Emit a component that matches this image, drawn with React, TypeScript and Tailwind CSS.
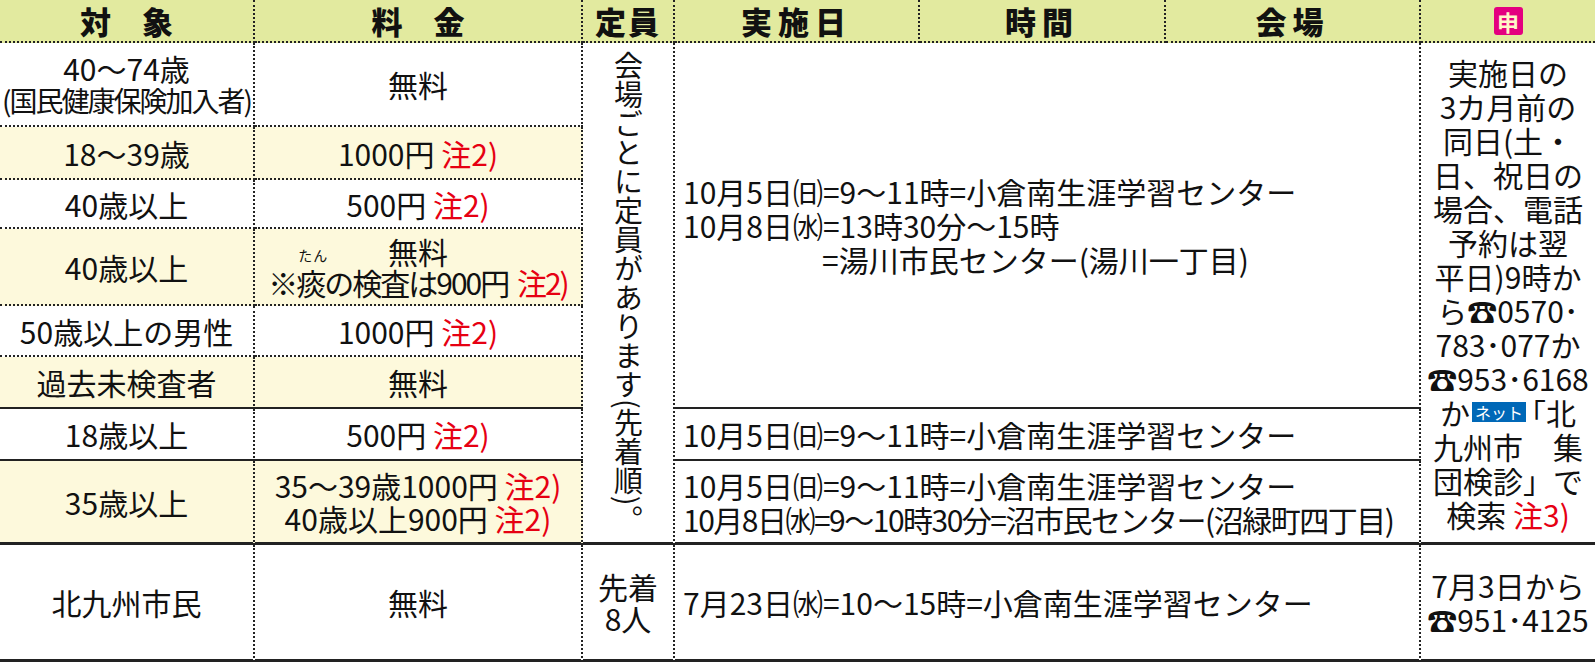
import React from 'react';

/** 罫線 */
const dotR = 'border-r-2 [border-right-style:dotted] border-r-[#222]';
const dotB = 'border-b-2 [border-bottom-style:dotted] border-b-[#222]';
const solB = 'border-b-2 border-b-[#222]';
const solB3 = 'border-b-[3px] border-b-[#222]';

const cream = 'bg-[#fdf9dc]';

const Note: React.FC<{ n?: string; className?: string }> = ({ n = '2', className = '' }) => (
  <span className={`text-[#e60012] ${className}`}> 注{n})</span>
);

const Cell: React.FC<{ className?: string; children?: React.ReactNode }> = ({ className = '', children }) => (
  <div className={`flex flex-col items-center justify-center text-center whitespace-nowrap ${className}`}>{children}</div>
);

const headers = [
  { label: '対　象', w: 'w-[255px]', cls: '' },
  { label: '料　金', w: 'w-[328px]', cls: '' },
  { label: '定員', w: 'w-[92px]', cls: 'tracking-[2px]' },
  { label: '実施日', w: 'w-[245px]', cls: 'tracking-[6px]' },
  { label: '時間', w: 'w-[246px]', cls: 'tracking-[6px]' },
  { label: '会場', w: 'w-[255px]', cls: 'tracking-[6px]' },
];

// 対象・料金の行
const rows: { target: React.ReactNode; fee: React.ReactNode; bg: string; border: string }[] = [
  {
    target: (
      <>
        <div className="leading-[32px]">40～74歳</div>
        <div className="leading-[32px] text-[28px] tracking-[-2px]">(国民健康保険加入者)</div>
      </>
    ),
    fee: <div>無料</div>,
    bg: '',
    border: dotB,
  },
  { target: <div>18～39歳</div>, fee: <div>1000円<Note /></div>, bg: cream, border: dotB },
  { target: <div>40歳以上</div>, fee: <div>500円<Note /></div>, bg: '', border: dotB },
  {
    target: <div>40歳以上</div>,
    fee: (
      <>
        <div className="leading-[31px]">無料</div>
        <div className="leading-[31px] tracking-[-2px]">
          ※
          <span className="relative">
            痰
            <span className="absolute -top-[12px] left-[2px] right-0 text-center text-[14px] tracking-[1px] leading-none">
              たん
            </span>
          </span>
          の検査は900円<Note className="ml-[4px]" />
        </div>
      </>
    ),
    bg: cream,
    border: dotB,
  },
  { target: <div>50歳以上の男性</div>, fee: <div>1000円<Note /></div>, bg: '', border: dotB },
  { target: <div>過去未検査者</div>, fee: <div>無料</div>, bg: cream, border: solB },
  { target: <div>18歳以上</div>, fee: <div>500円<Note /></div>, bg: '', border: solB },
  {
    target: <div>35歳以上</div>,
    fee: (
      <>
        <div className="leading-[33px]">35～39歳1000円<Note /></div>
        <div className="leading-[33px]">40歳以上900円<Note /></div>
      </>
    ),
    bg: cream,
    border: solB3,
  },
  { target: <div>北九州市民</div>, fee: <div>無料</div>, bg: '', border: solB3 },
];

export default function App() {
  return (
    <div className="w-[1595px] h-[662px] bg-white text-[#111] text-[30px] leading-none font-['Noto_Sans_CJK_JP',sans-serif] overflow-hidden">
      {/* 見出し */}
      <div className="flex h-[43px] bg-[#e2ea9f]">
        {headers.map((h) => (
          <div
            key={h.label}
            className={`${h.w} ${dotR} ${dotB} flex items-center justify-center text-[31px] leading-[40px] font-black ${h.cls}`}
          >
            {h.label}
          </div>
        ))}
        <div className={`w-[174px] ${dotB} flex items-center justify-center`}>
          <span className="w-[29px] h-[28px] rounded-[3px] bg-[#e4007f] text-[#fff6c8] text-[22px] font-bold flex items-center justify-center">
            申
          </span>
        </div>
      </div>

      {/* 本体 */}
      <div className="grid grid-cols-[255px_328px_92px_746px_174px] grid-rows-[84px_53px_49px_77px_51px_52px_52px_84px_117px]">
        {rows.map((r, i) => (
          <React.Fragment key={i}>
            <Cell className={`col-start-1 ${r.bg} ${dotR} ${r.border}`}>{r.target}</Cell>
            <Cell className={`col-start-2 ${r.bg} ${dotR} ${r.border}`}>{r.fee}</Cell>
          </React.Fragment>
        ))}

        {/* 定員 */}
        <div className={`col-start-3 row-start-1 row-span-8 ${dotR} ${solB3} flex items-center justify-center`}>
          <span className="[writing-mode:vertical-rl] text-[29px] leading-none">会場ごとに定員があります(先着順)。</span>
        </div>
        <Cell className={`col-start-3 row-start-9 ${dotR} ${solB3} leading-[32px]`}>
          <div>先着</div>
          <div>8人</div>
        </Cell>

        {/* 実施日・時間・会場 */}
        <div className={`col-start-4 row-start-1 row-span-6 ${dotR} ${solB} flex flex-col justify-center pl-[8px] leading-[34px] whitespace-nowrap`}>
          <div>10月5日㈰=9～11時=小倉南生涯学習センター</div>
          <div>10月8日㈬=13時30分～15時</div>
          <div className="pl-[139px]">=湯川市民センター(湯川一丁目)</div>
        </div>
        <div className={`col-start-4 row-start-7 ${dotR} ${solB} flex flex-col justify-center pl-[8px] whitespace-nowrap`}>
          <div>10月5日㈰=9～11時=小倉南生涯学習センター</div>
        </div>
        <div className={`col-start-4 row-start-8 ${dotR} ${solB3} flex flex-col justify-center pl-[8px] leading-[34px] whitespace-nowrap`}>
          <div>10月5日㈰=9～11時=小倉南生涯学習センター</div>
          <div className="tracking-[-1.5px]">10月8日㈬=9～10時30分=沼市民センター(沼緑町四丁目)</div>
        </div>
        <div className={`col-start-4 row-start-9 ${dotR} ${solB3} flex flex-col justify-center pl-[8px] whitespace-nowrap`}>
          <div>7月23日㈬=10～15時=小倉南生涯学習センター</div>
        </div>

        {/* 申込 */}
        <Cell className={`col-start-5 row-start-1 row-span-8 ${solB3} leading-[34px]`}>
          <div>実施日の</div>
          <div>3カ月前の</div>
          <div>同日(土・</div>
          <div>日、祝日の</div>
          <div>場合、電話</div>
          <div>予約は翌</div>
          <div>平日)9時か</div>
          <div>ら☎0570･</div>
          <div>783･077か</div>
          <div>☎953･6168</div>
          <div className="flex items-center">
            か
            <span className="ml-[2px] px-[3px] bg-[#0068b7] text-white text-[16px] leading-[20px]">ネット</span>
            <span className="-ml-[10px]">「北</span>
          </div>
          <div>九州市　集</div>
          <div>団検診」で</div>
          <div>
            検索<Note n="3" />
          </div>
        </Cell>
        <Cell className={`col-start-5 row-start-9 ${solB3} leading-[34px]`}>
          <div>7月3日から</div>
          <div>☎951･4125</div>
        </Cell>
      </div>
    </div>
  );
}
